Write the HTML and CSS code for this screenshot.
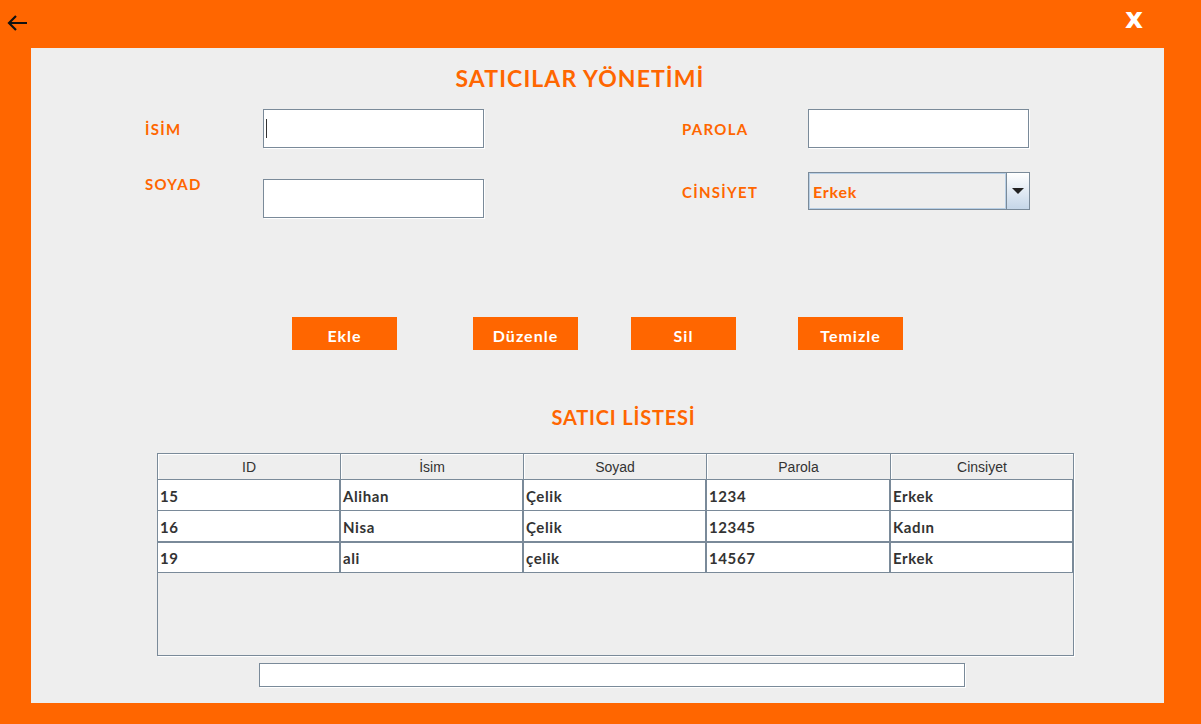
FILE: index.html
```html
<!DOCTYPE html>
<html lang="tr">
<head>
<meta charset="utf-8">
<title>Satıcılar Yönetimi</title>
<link rel="stylesheet" href="styles.css">
</head>
<body>
<div class="topbar">
  <svg class="back" width="22" height="18" viewBox="0 0 22 18"><path d="M21 9H3M10 2L3 9l7 7" fill="none" stroke="#111" stroke-width="2.2"/></svg>
  <span class="close">x</span>
</div>
<div class="panel">
  <h1 class="title">SATICILAR YÖNETİMİ</h1>
  <div class="form">
    <div class="col col-left">
      <div class="field">
        <label class="lbl">İSİM</label>
        <div class="input"><span class="caret"></span></div>
      </div>
      <div class="field field-top">
        <label class="lbl">SOYAD</label>
        <div class="input"></div>
      </div>
    </div>
    <div class="col col-right">
      <div class="field">
        <label class="lbl lbl-r">PAROLA</label>
        <div class="input"></div>
      </div>
      <div class="field field-combo">
        <label class="lbl lbl-r">CİNSİYET</label>
        <div class="combo">
          <div class="combo-val">Erkek</div>
          <div class="combo-btn"><span class="tri"></span></div>
        </div>
      </div>
    </div>
  </div>
  <div class="buttons">
    <button class="btn">Ekle</button>
    <button class="btn btn-2">Düzenle</button>
    <button class="btn btn-3">Sil</button>
    <button class="btn btn-4">Temizle</button>
  </div>
  <h2 class="subtitle">SATICI LİSTESİ</h2>
  <div class="table">
    <div class="thead">
      <div class="th">ID</div><div class="th">İsim</div><div class="th">Soyad</div><div class="th">Parola</div><div class="th">Cinsiyet</div>
    </div>
    <div class="tr"><div class="td">15</div><div class="td">Alihan</div><div class="td">Çelik</div><div class="td">1234</div><div class="td">Erkek</div></div>
    <div class="tr"><div class="td">16</div><div class="td">Nisa</div><div class="td">Çelik</div><div class="td">12345</div><div class="td">Kadın</div></div>
    <div class="tr tr-sel"><div class="td">19</div><div class="td">ali</div><div class="td">çelik</div><div class="td">14567</div><div class="td">Erkek</div></div>
  </div>
  <div class="status"></div>
</div>
</body>
</html>
```
FILE: styles.css
```css
* { box-sizing: border-box; }
html, body { margin: 0; padding: 0; }
body {
  background: #ff6600;
  font-family: "Lato", "Noto Sans", sans-serif;
  width: 1201px;
  height: 724px;
  overflow: hidden;
}
.topbar {
  height: 48px;
  display: flex;
  justify-content: space-between;
  align-items: flex-start;
  padding: 0 58px 0 6px;
}
.back { margin-top: 14px; }
.close {
  color: #fff;
  font-family: "DejaVu Sans", sans-serif;
  font-weight: bold;
  font-size: 28px;
  line-height: 1;
  margin-top: 5px;
}
.panel {
  margin-left: 31px;
  width: 1133px;
  height: 655px;
  background: #eeeeee;
  padding-top: 15px;
}
.title {
  margin: 0;
  text-align: center;
  color: #ff6600;
  font-size: 23px;
  font-weight: 700;
  letter-spacing: 1.1px;
  line-height: 30px;
  padding-right: 35px;
}
.form {
  display: flex;
  margin-top: 16px;
  padding-left: 114px;
}
.col { display: flex; flex-direction: column; }
.col-left { width: 537px; gap: 31px; }
.col-right { gap: 24px; }
.field { display: flex; align-items: center; height: 39px; }
.field-top { align-items: flex-start; }
.field-combo { height: 38px; }
.lbl {
  color: #ff6600;
  font-weight: 700;
  font-size: 15px;
  letter-spacing: 1.3px;
  width: 118px;
}
.field-top .lbl { margin-top: -4px; }
.lbl-r { width: 126px; }
.field-combo .lbl { margin-top: 1px; }
.input {
  width: 221px;
  height: 39px;
  background: #fff;
  border: 1px solid #7a8a99;
  box-shadow: 1px 1px 0 #fff;
  display: flex;
  align-items: center;
  padding-left: 2px;
}
.caret { width: 1px; height: 19px; background: #333; }
.combo {
  width: 222px;
  height: 38px;
  border: 1px solid #7a8a99;
  display: flex;
}
.combo-val {
  flex: 1;
  border: 1px solid #b8cfe5;
  background: #eeeeee;
  color: #ff6600;
  font-weight: 700;
  font-size: 16px;
  letter-spacing: 0.8px;
  display: flex;
  align-items: center;
  padding-left: 3px;
}
.combo-btn {
  width: 23px;
  border-left: 1px solid #7a8a99;
  background: linear-gradient(#ffffff, #c5d6e8);
  display: flex;
  align-items: center;
  justify-content: center;
}
.tri {
  width: 0; height: 0;
  border-left: 6px solid transparent;
  border-right: 6px solid transparent;
  border-top: 6px solid #222;
}
.buttons {
  display: flex;
  margin-top: 99px;
  padding-left: 261px;
}
.btn {
  width: 105px;
  height: 33px;
  background: #ff6600;
  color: #fff;
  border: none;
  font-family: inherit;
  font-weight: 700;
  font-size: 16px;
  letter-spacing: 1px;
  padding: 3px 0 0;
}
.btn-2 { margin-left: 76px; }
.btn-3 { margin-left: 53px; }
.btn-4 { margin-left: 62px; }
.subtitle {
  margin: 52px 0 0;
  text-align: center;
  color: #ff6600;
  font-size: 20px;
  font-weight: 700;
  letter-spacing: 0.8px;
  line-height: 30px;
  padding-left: 52px;
}
.table {
  margin: 21px 0 0 126px;
  width: 917px;
  height: 203px;
  border: 1px solid #7a8a99;
  background: #eeeeee;
  box-shadow: 1px 1px 0 #fff;
}
.thead, .tr { display: grid; grid-template-columns: 183px 183px 183px 184px 183px; }
.th {
  height: 26px;
  border-right: 1px solid #7a8a99;
  border-bottom: 1px solid #7a8a99;
  box-shadow: inset 1px 1px 0 #fff;
  font-family: "Liberation Sans", Arial, sans-serif;
  font-size: 14px;
  color: #333;
  text-align: center;
  line-height: 27px;
}
.tr { background: #fff; }
.td {
  height: 31px;
  border-right: 2px solid #7a8a99;
  border-bottom: 1px solid #7a8a99;
  font-weight: 700;
  font-size: 15px;
  letter-spacing: 0.6px;
  color: #333;
  padding-left: 2px;
  line-height: 32px;
}
.tr-sel .td { border-top: 1px solid #7a8a99; line-height: 30px; }
.status {
  margin: 7px 0 0 228px;
  width: 706px;
  height: 24px;
  background: #fff;
  border: 1px solid #7a8a99;
  box-shadow: 1px 1px 0 #fff;
}
```
